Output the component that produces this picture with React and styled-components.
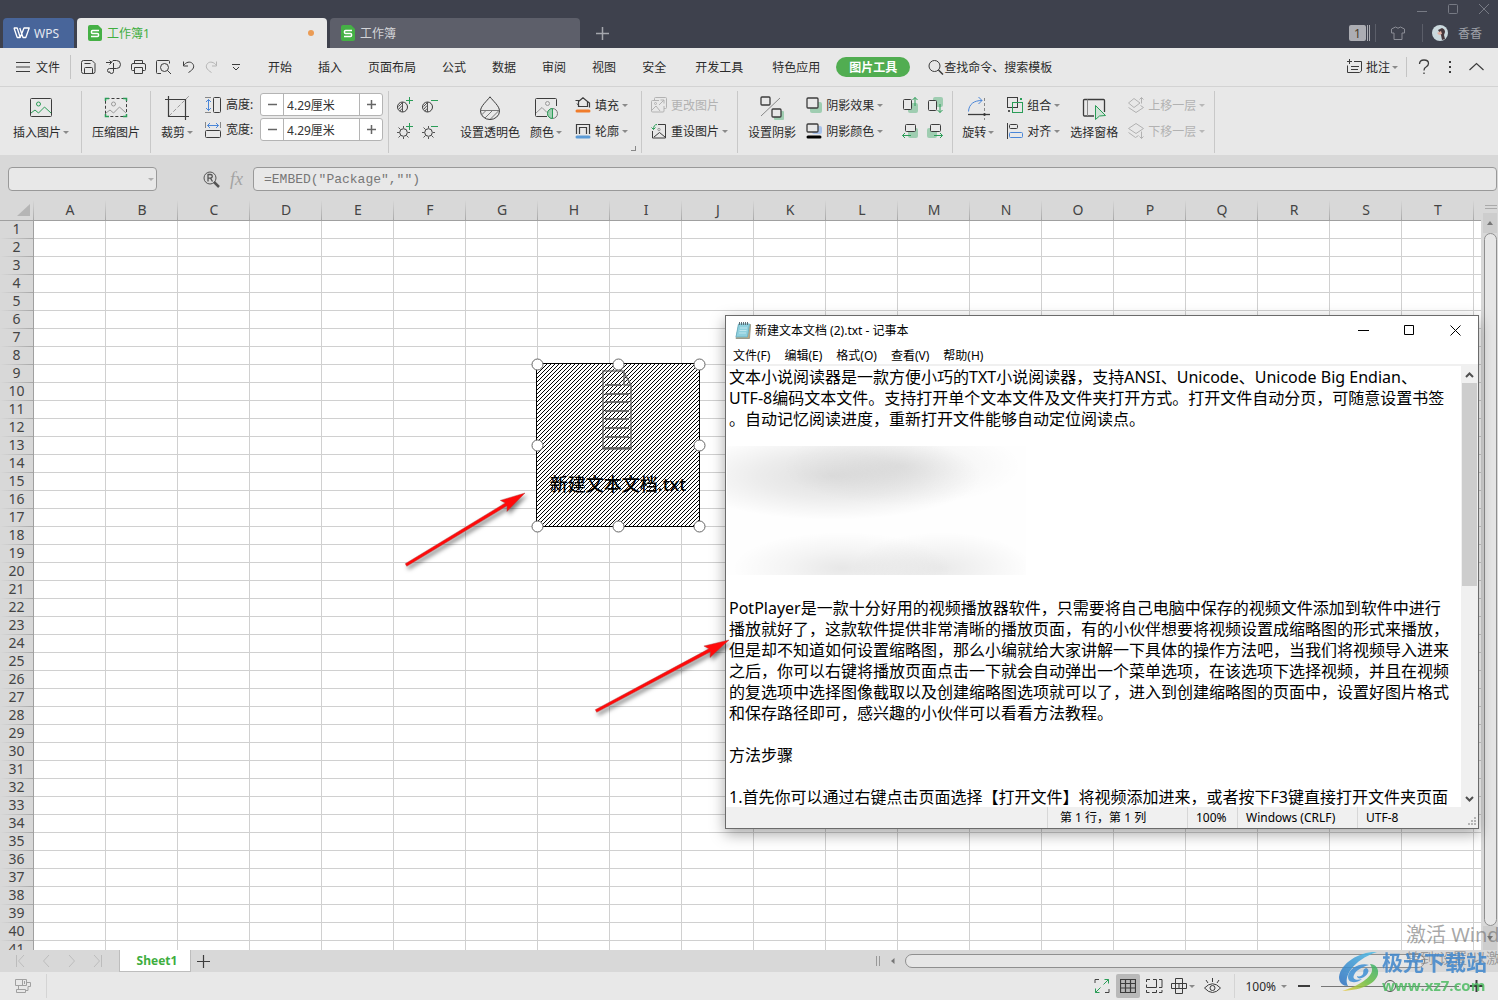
import React from 'react'
import styled, { createGlobalStyle } from 'styled-components'

const COLUMNS = 'ABCDEFGHIJKLMNOPQRST'.split('')
const ROWS = Array.from({ length: 41 }, (_, i) => i + 1)

const MENUS = ['开始', '插入', '页面布局', '公式', '数据', '审阅', '视图', '安全']

const NOTE_TEXT = [
  '文本小说阅读器是一款方便小巧的TXT小说阅读器，支持ANSI、Unicode、Unicode Big Endian、',
  'UTF-8编码文本文件。支持打开单个文本文件及文件夹打开方式。打开文件自动分页，可随意设置书签',
  '。自动记忆阅读进度，重新打开文件能够自动定位阅读点。',
  '', '', '', '', '', '', '', '',
  'PotPlayer是一款十分好用的视频播放器软件，只需要将自己电脑中保存的视频文件添加到软件中进行',
  '播放就好了，这款软件提供非常清晰的播放页面，有的小伙伴想要将视频设置成缩略图的形式来播放，',
  '但是却不知道如何设置缩略图，那么小编就给大家讲解一下具体的操作方法吧，当我们将视频导入进来',
  '之后，你可以右键将播放页面点击一下就会自动弹出一个菜单选项，在该选项下选择视频，并且在视频',
  '的复选项中选择图像截取以及创建缩略图选项就可以了，进入到创建缩略图的页面中，设置好图片格式',
  '和保存路径即可，感兴趣的小伙伴可以看看方法教程。',
  '',
  '方法步骤',
  '',
  '1.首先你可以通过右键点击页面选择【打开文件】将视频添加进来，或者按下F3键直接打开文件夹页面',
].join('\n')

/* ---------- icons ---------- */

const Svg = styled.svg`
  display: block;
  flex: none;
  fill: none;
  stroke: ${(p) => p.$color || '#3c3c3c'};
  stroke-width: 1;
`

function Icon({ w = 16, h = 16, color, children }) {
  return (
    <Svg width={w} height={h} viewBox={`0 0 ${w} ${h}`} $color={color} aria-hidden="true">
      {children}
    </Svg>
  )
}

const GREEN = '#2a9d57'
const BLUE = '#4a86d8'
const SHADE = '#9fcdb1'

const SheetLogo = () => (
  <Icon w={14} h={16} color="none">
    <path d="M2 0h8l4 4v10a2 2 0 0 1-2 2H2a2 2 0 0 1-2-2V2a2 2 0 0 1 2-2z" fill="#45b045" />
    <path d="M11 5.5H4.5q-1 0-1 1v1q0 1 1 1h5q1 0 1 1v1q0 1-1 1H3" stroke="#fff" strokeWidth="1.5" />
  </Icon>
)

const WpsLogo = () => (
  <Icon w={17} h={12} color="#fff">
    <path d="M.8 1h3.4l3 9.500L11 1h5.200l-3.400 9.500H10L6.800 1M4 10.500h3.200M4.200 10.500L1 1M10 10.500L8.600 6.500" strokeWidth="1.300" strokeLinejoin="round" />
  </Icon>
)

const SaveIcon = () => (
  <Icon w={15}>
    <path d="M.5 3.500a2 2 0 0 1 2-2h8.500l3 3v8a2 2 0 0 1-2 2H2.500a2 2 0 0 1-2-2zM3.500 14V9.500a1 1 0 0 1 1-1h6a1 1 0 0 1 1 1V14M3.500 4.500h6" />
  </Icon>
)

const ExportIcon = () => (
  <Icon w={15}>
    <path d="M0 3.500h5.500M3.500 1.500l2 2-2 2M5 3.500L7 1.500h3.500a4 4 0 0 1 0 8H3.500a2 2 0 1 0 0 4M7.500 4v8.500a2 2 0 0 1-4 0" />
  </Icon>
)

const PrintIcon = () => (
  <Icon w={15}>
    <path d="M3.500 4.500v-3h8v3M3.500 11.500h-2a1 1 0 0 1-1-1v-4.500a1.500 1.500 0 0 1 1.500-1.500h11a1.500 1.500 0 0 1 1.500 1.500v4.500a1 1 0 0 1-1 1h-2M3.500 8.500h8v6h-8z" />
  </Icon>
)

const PreviewIcon = () => (
  <Icon w={16}>
    <path d="M5 14.500H1.500a1 1 0 0 1-1-1v-11a1 1 0 0 1 1-1h11a1 1 0 0 1 1 1v2M11.500 11.500l3.500 3.500" />
    <circle cx="8.500" cy="8.500" r="4" />
  </Icon>
)

const UndoIcon = ({ flip }) => (
  <Icon w={13} color={flip ? '#b5b5b5' : undefined}>
    <path
      transform={flip ? 'translate(13 0) scale(-1 1)' : undefined}
      d="M1.500 2.500v4.500h4.500M1.500 6.500C4 3 8 2 10.500 4.500c2.500 3 1 6-4 9"
    />
  </Icon>
)

const MoreIcon = () => (
  <Icon w={15}>
    <path d="M4 5.500h8M5 8l3 3 3-3" />
  </Icon>
)

const SearchIcon = () => (
  <Icon w={16}>
    <circle cx="6.500" cy="7" r="5.500" />
    <path d="M10.500 11l4.500 4.500" strokeWidth="1.500" />
  </Icon>
)

const CommentIcon = () => (
  <Icon w={16}>
    <path d="M2.500 0v5M0 2.500h5M7 2.500h7.500v9.500l-2 1.500h-12v-7M4 7.500h8M4 10.500h7" />
  </Icon>
)

const PictureIcon = ({ muted, children }) => (
  <Icon w={24} h={24}>
    <rect x="1.500" y="2.500" width="21" height="18" rx="1" strokeDasharray={muted ? '3 2' : undefined} />
    <circle cx="9.500" cy="8" r="2" stroke={muted ? '#999' : GREEN} />
    <path d="M2 17l4-3 3.500 3 6-6 6.500 6" stroke={muted ? '#999' : GREEN} />
    {children}
  </Icon>
)

const CropIcon = () => (
  <Icon w={24} h={24}>
    <path d="M3.500 0v20.500H24M0 3.500h20.500V24" strokeWidth="1.200" />
    <path d="M4 20L24 0" strokeDasharray="4 2" stroke="#999" />
  </Icon>
)

const HeightIcon = () => (
  <Icon>
    <rect x="8.500" y=".5" width="7" height="15" rx="1" />
    <path d="M0 .5h6M0 15.500h6" stroke="#888" />
    <path d="M3.500 2.500v11M1 5l2.500-2.500L6 5M1 11l2.500 2.500L6 11" stroke={BLUE} />
  </Icon>
)

const WidthIcon = () => (
  <Icon>
    <rect x=".5" y="8.500" width="15" height="7" rx="1" />
    <path d="M.5 0v6M15.500 0v6" stroke="#888" />
    <path d="M2.500 3.500h11M5 1L2.500 3.500 5 6M11 1l2.500 2.500L11 6" stroke={BLUE} />
  </Icon>
)

const ContrastIcon = ({ minus }) => (
  <Icon>
    <circle cx="5.500" cy="10" r="5" />
    <path d="M5.500 5v10M5 6L1.500 9.500M5 8.500L2 12M5 11.500L3 14" stroke="#555" />
    <path d={minus ? 'M9 3.500h7' : 'M9 3.500h7M12.500 0v7'} stroke={GREEN} />
  </Icon>
)

const BrightIcon = ({ minus }) => (
  <Icon>
    <circle cx="6.500" cy="9.500" r="3.800" />
    <path d="M6.500 5V3M6.500 16v-2M2.500 9.500H0M13 9.500h-2M3.500 6.500L1.500 4.500M3.500 12.500l-2 2M9.500 12.500l2 2" stroke="#555" />
    <path d={minus ? 'M9 3.500h7' : 'M9 3.500h7M12.500 0v7'} stroke={GREEN} />
  </Icon>
)

const DropIcon = () => (
  <Icon w={24} h={24}>
    <path d="M12 .8C9 5 2.500 10 2.500 15a9.500 8.500 0 0 0 19 0C21.500 10 15 5 12 .8z" />
    <path d="M2.500 14.500h19M3.500 19l4.500-4.500M7 22l7-7M12.500 23l8-8" stroke="#777" />
  </Icon>
)

const ColorIcon = () => (
  <Icon w={24} h={24}>
    <path d="M13 20.500H2.500a1 1 0 0 1-1-1v-16a1 1 0 0 1 1-1h19a1 1 0 0 1 1 1V10" />
    <circle cx="13.500" cy="7.500" r="2" stroke="#999" />
    <path d="M2 17l6-5.500 5 5" stroke="#999" />
    <circle cx="18.500" cy="17.500" r="5" stroke="#777" />
    <path d="M18.500 12.500v10a5 5 0 0 1 0-10z" fill={SHADE} stroke={GREEN} />
  </Icon>
)

const FillIcon = () => (
  <Icon>
    <path d="M.5 3.500h4M8 .8L3.500 4.500v5h9v-5zM12.500 4.500l2 1.500v4.500" strokeWidth="1.200" />
    <path d="M4 9l-2-2.500" />
    <path d="M2 14h12" stroke="#f07c2b" strokeWidth="3" strokeLinecap="round" />
  </Icon>
)

const OutlineIcon = () => (
  <Icon>
    <path d="M1.500 11V1.500h13V11M4.500 11V4.500h7V11" strokeWidth="1.200" />
    <path d="M2 14h12" stroke="#5a9ad6" strokeWidth="3" strokeLinecap="round" />
  </Icon>
)

const ChangePicIcon = () => (
  <Icon color="#b2b2b2">
    <path d="M3.500 3V1.500a1 1 0 0 1 1-1h10a1 1 0 0 1 1 1v9a1 1 0 0 1-1 1H13M8 3.500H1.500a1 1 0 0 0-1 1v9.500a1 1 0 0 0 1 1H12a1 1 0 0 0 1-1V9M1 13l4-4 4 5M8 8l5-5M9.500 3H13v3.500" />
    <circle cx="4.500" cy="6.500" r="1" />
  </Icon>
)

const ResetPicIcon = () => (
  <Icon>
    <path d="M7 1.500h7.500v13.500h-13V8M3 14l5.500-4.500L14 14" />
    <circle cx="8" cy="6.500" r="1.200" stroke="#999" />
    <path d="M6 1.500q-3.500 0-3.500 5M.5 4.500l2 2 2-2" stroke={GREEN} />
  </Icon>
)

const SetShadowIcon = () => (
  <Icon w={24} h={24}>
    <rect x="14" y="15" width="10" height="9" rx="1" fill={SHADE} stroke="none" />
    <path d="M1 20L20 2" stroke="#888" />
    <rect x="1" y="1" width="9" height="8" rx="1" strokeWidth="1.300" />
    <rect x="12" y="13" width="9" height="8" rx="1" fill="#e8e8e8" strokeWidth="1.300" />
  </Icon>
)

const ShadowFxIcon = () => (
  <Icon>
    <rect x="4" y="5" width="12" height="11" rx="2" fill={SHADE} stroke="none" />
    <rect x="1" y="1" width="11" height="10" rx="1" fill="#e8e8e8" strokeWidth="1.300" />
  </Icon>
)

const ShadowColorIcon = () => (
  <Icon>
    <rect x="6" y="3" width="10" height="8" rx="2" fill="#a9c2ea" stroke="none" />
    <rect x="1" y="1" width="11" height="8" rx="1" fill="#e8e8e8" strokeWidth="1.300" />
    <path d="M2 14h12" stroke="#000" strokeWidth="3" strokeLinecap="round" />
  </Icon>
)

const NUDGES = {
  up: { shade: [6, 6], box: [1, 2], arrow: 'M13 9V.5M10.500 3L13 .5 15.500 3' },
  down: { shade: [6, 0], box: [1, 3], arrow: 'M13 7v8.500M10.500 13l2.500 2.500 2.500-2.500' },
  left: { shade: [6, 5], box: [3, 1], arrow: 'M9 12.500H.5M3 10L.5 12.500 3 15' },
  right: { shade: [0, 5], box: [3, 1], arrow: 'M7 12.500h8.500M13 10l2.500 2.500L13 15' },
}

const NudgeIcon = ({ dir }) => {
  const n = NUDGES[dir]
  const flat = dir === 'left' || dir === 'right'
  return (
    <Icon>
      <rect x={n.shade[0]} y={n.shade[1]} width="10" height="10" rx="2" fill={SHADE} stroke="none" />
      <rect x={n.box[0] + 0.5} y={n.box[1] + 0.5} width={flat ? 10 : 8} height={flat ? 7 : 10} rx="1" fill="#e8e8e8" />
      <path d={n.arrow} stroke={GREEN} />
    </Icon>
  )
}

const RotateIcon = () => (
  <Icon w={24} h={24}>
    <path d="M2.500 15.500C3 8 8 4.500 16 4.500M12.500 1l3.500 3.500L12.500 8" stroke={BLUE} />
    <path d="M18.500 2v22" stroke="#888" strokeDasharray="3 2" />
    <path d="M2 18.500h22" strokeWidth="1.300" />
    <circle cx="18.500" cy="18.500" r="1" fill="#333" />
  </Icon>
)

const GroupIcon = () => (
  <Icon>
    <rect x=".5" y=".5" width="10" height="10" />
    <rect x="5.500" y="5.500" width="10" height="10" stroke={GREEN} />
    <path d="M1 14h2" strokeWidth="2" stroke="#555" />
    <rect x="13" y="1" width="2" height="2" fill={GREEN} stroke="none" />
  </Icon>
)

const AlignIcon = () => (
  <Icon>
    <path d="M.5 0v16" />
    <rect x="2.500" y="1.500" width="8" height="4" rx="1" />
    <rect x="2.500" y="9.500" width="13" height="5" rx="1" stroke={BLUE} />
  </Icon>
)

const PaneIcon = () => (
  <Icon w={24} h={24}>
    <path d="M12 20H2.500a1 1 0 0 1-1-1V4.500a1 1 0 0 1 1-1h19a1 1 0 0 1 1 1V16" strokeWidth="1.300" />
    <path d="M5.500 3.500V20" stroke="#888" />
    <path d="M13.500 9.500v14l4-3.500 6-.5z" fill="#cfe3d7" stroke={GREEN} />
  </Icon>
)

const LayerIcon = ({ down }) => (
  <Icon color="#b2b2b2">
    {down ? (
      <path d="M.5 5.500l7.500-5 7.500 5-7.500 5zM.5 9.500l7 5 3-2M13.500 8.500v7M11.500 13.500l2 2 2-2" />
    ) : (
      <path d="M.5 6l5.500-4.500L12 6l-6 4.500zM.5 10.500l7.500 5 7.500-5-3-2M13.500 6.500v-6M11.500 2.500l2-2 2 2" />
    )}
  </Icon>
)

const NotepadIcon = () => (
  <Icon w={16} h={17} color="#5d6d74">
    <path d="M4 2.500h11.500l-1 14H1z" fill="#c4a779" stroke="#9b9b8c" />
    <path d="M3.500 2h11L12.500 15H1z" fill="#8fd0de" stroke="#6fb3c4" />
    <path d="M5 6h7M4.500 8.500h7M4 11h7" stroke="#bfe6ee" />
    <path d="M4.500 0v3M6.500 0v3M8.500 0v3M10.500 0v3M12.500 0v3" />
  </Icon>
)

/* ---------- shared parts ---------- */

const GlobalStyle = createGlobalStyle`
  * { box-sizing: border-box; }
  body {
    margin: 0;
    overflow: hidden;
  }
  body, button, input, textarea {
    font-family: "Noto Sans", "Noto Sans CJK SC", sans-serif;
    font-size: 12px;
  }
  button {
    border: none;
    background: none;
    padding: 0;
    color: inherit;
    white-space: nowrap;
  }
`

const Page = styled.div`
  position: relative;
  display: flex;
  flex-direction: column;
  height: 100vh;
  overflow: hidden;
  background: #d8d8d8;
  color: #2b2b2b;
  line-height: 16px;
`

const Caret = styled.span`
  flex: none;
  margin-left: -1px;
  border: solid transparent;
  border-width: 3px 3px 0;
  border-top-color: ${(p) => p.$color || '#8a8a8a'};
`

const Rule = styled.span`
  width: 1px;
  height: ${(p) => p.$h || 24}px;
  margin: ${(p) => p.$m || 0};
  background: ${(p) => p.$color || '#c4c4c4'};
`

/* ---------- title bar ---------- */

const TitleBar = styled.header`
  background: #3e414d;
`

const WindowButtons = styled.div`
  display: flex;
  justify-content: flex-end;
  align-items: center;
  gap: 21px;
  height: 18px;
  padding-right: 9px;

  button {
    display: flex;
  }
`

const Tabs = styled.div`
  display: flex;
  align-items: flex-end;
  gap: 3px;
  height: 30px;
  padding-left: 3px;
`

const WpsTab = styled.button`
  display: flex;
  align-items: center;
  gap: 4px;
  width: 71px;
  height: 30px;
  padding-left: 10px;
  border-radius: 4px 4px 0 0;
  background: #48659a;
  color: #e4e8f0;
`

const DocTab = styled.button`
  display: flex;
  align-items: center;
  gap: 5px;
  width: 250px;
  height: 30px;
  padding: 0 13px 0 11px;
  border-radius: 4px 4px 0 0;
  background: ${(p) => (p.$active ? '#e8e8e8' : '#5d5f6a')};
  color: ${(p) => (p.$active ? '#3fae3f' : '#d3d4d8')};
`

const Dot = styled.span`
  width: 6px;
  height: 6px;
  margin-left: auto;
  border-radius: 50%;
  background: #eb9c55;
`

const PlusTab = styled.button`
  display: flex;
  align-items: center;
  height: 30px;
  padding: 0 13px;
`

const UserArea = styled.div`
  display: flex;
  align-items: center;
  height: 30px;
  margin-left: auto;
  padding-right: 16px;
  color: #9fa1a9;
`

const TabCount = styled.button`
  display: flex;
  margin-right: 5px;

  span {
    width: 17px;
    height: 16px;
    border-radius: 2px;
    background: #acadb3;
    color: #4a3c28;
    text-align: center;
  }

  i {
    width: 1px;
    height: 16px;
    margin-left: 1px;
    background: #acadb3;
  }
`

const UserItem = styled.button`
  display: flex;
  align-items: center;
  gap: 10px;
  padding: ${(p) => p.$pad};
`

/* ---------- menu bar ---------- */

const MenuBar = styled.nav`
  display: flex;
  align-items: center;
  height: 39px;
  padding: 0 10px 0 15px;
  border-bottom: 1px solid #d3d3d3;
  background: #e8e8e8;
`

const FileButton = styled.button`
  display: flex;
  align-items: center;
  gap: 5px;
  margin-right: 10px;
`

const QuickBar = styled.div`
  display: flex;
  align-items: center;
  gap: 10px;
  margin: 0 12px 0 10px;
`

const MenuButton = styled.button`
  height: 20px;
  padding: 0 13px;
  border-radius: 10px;
  background: ${(p) => (p.$active ? '#51ad51' : 'none')};
  color: ${(p) => (p.$active ? '#fff' : 'inherit')};
  font-weight: ${(p) => (p.$active ? 600 : 400)};
`

const ToolMenus = styled.div`
  display: flex;
  gap: 3px;
  margin-left: 3px;
`

const SearchButton = styled.button`
  display: flex;
  align-items: center;
  margin-left: 18px;
`

const MenuRight = styled.div`
  display: flex;
  align-items: center;
  margin-left: auto;
`

const RightButton = styled.button`
  display: flex;
  align-items: center;
  justify-content: center;
  gap: 3px;
  min-width: 24px;
  margin-right: ${(p) => p.$gap || 0}px;
`

/* ---------- ribbon ---------- */

const Ribbon = styled.section`
  display: flex;
  height: 68px;
  background: #e8e8e8;
`

const Group = styled.div`
  display: flex;
  height: 62px;
  margin-top: 4px;
  padding: ${(p) => p.$pad};
  border-right: 1px solid #c8c8c8;
`

const BigTool = styled.button`
  display: flex;
  flex-direction: column;
  align-items: center;
  gap: 3px;
  height: 50px;
  padding-top: 5px;
  margin-left: ${(p) => p.$ml || 0}px;

  > span {
    display: flex;
    align-items: center;
    gap: 3px;
  }
`

const Stack = styled.div`
  display: flex;
  flex-direction: column;
  padding-top: 1px;
  margin-left: ${(p) => p.$ml || 0}px;
`

const SmallTool = styled.button`
  display: flex;
  align-items: center;
  gap: 4px;
  height: 26px;
  color: ${(p) => (p.$disabled ? '#b2b2b2' : 'inherit')};
`

const SizeRow = styled.div`
  display: flex;
  align-items: center;
  gap: 5px;
  height: 25px;

  label {
    width: 29px;
    white-space: nowrap;
  }
`

const Spinner = styled.div`
  display: flex;
  width: 123px;
  height: 23px;
  border: 1px solid #b4b4b4;
  border-radius: 3px;
  background: #fff;

  button {
    width: 22px;
    color: #666;
    display: flex;
    align-items: center;
    justify-content: center;
  }

  input {
    flex: 1;
    min-width: 0;
    border: solid #b4b4b4;
    border-width: 0 1px;
    padding: 0 3px;
    color: #333;
    background: #fff;
  }
`

const IconGrid = styled.div`
  display: grid;
  grid-template-columns: 16px 16px;
  grid-auto-rows: 26px;
  column-gap: ${(p) => p.$gap}px;
  padding-top: 1px;
  margin-left: ${(p) => p.$ml || 0}px;

  button {
    display: flex;
    align-items: center;
  }
`

const Launcher = styled.button`
  align-self: flex-end;
  width: 5px;
  height: 5px;
  margin: 0 0 2px 3px;
  border: solid #888;
  border-width: 0 1px 1px 0;
`

function Big({ icon, label, caret, ml }) {
  return (
    <BigTool $ml={ml}>
      {icon}
      <span>
        {label}
        {caret && <Caret />}
      </span>
    </BigTool>
  )
}

function Small({ icon, label, caret, disabled }) {
  return (
    <SmallTool $disabled={disabled}>
      {icon}
      {label}
      {caret && <Caret $color={disabled ? '#b8b8b8' : undefined} />}
    </SmallTool>
  )
}

function SizeField({ id, icon, label }) {
  return (
    <SizeRow>
      {icon}
      <label htmlFor={id}>{label}</label>
      <Spinner>
        <button aria-label={`减小${label}`}>
          <Icon w={9} h={9} color="#666"><path d="M0 4.500h9" strokeWidth="1.500" /></Icon>
        </button>
        <input id={id} defaultValue="4.29厘米" />
        <button aria-label={`增大${label}`}>
          <Icon w={9} h={9} color="#666"><path d="M0 4.500h9M4.500 0v9" strokeWidth="1.500" /></Icon>
        </button>
      </Spinner>
    </SizeRow>
  )
}

/* ---------- formula bar ---------- */

const FormulaBar = styled.div`
  display: flex;
  align-items: center;
  height: 45px;
  padding: 3px 1px 0 8px;
`

const NameBox = styled.div`
  display: flex;
  align-items: center;
  width: 149px;
  height: 24px;
  margin-right: 46px;
  padding-right: 2px;
  border: 1px solid #999;
  border-radius: 4px;
  background: #e8e8e8;

  input {
    flex: 1;
    min-width: 0;
    border: none;
    background: none;
  }
`

const Fx = styled.span`
  width: 17px;
  margin: 0 6px 0 10px;
  color: #a3a3a3;
  font: italic 18px/20px "Liberation Serif", serif;
`

const FormulaInput = styled.input`
  flex: 1;
  min-width: 0;
  height: 24px;
  padding: 0 10px;
  border: 1px solid #999;
  border-radius: 4px;
  background: #e8e8e8;
  color: #777;
  font: 13px "Liberation Mono", monospace;
`

/* ---------- sheet ---------- */

const Sheet = styled.main`
  display: flex;
  flex: 1;
  min-height: 0;
`

const GridView = styled.div`
  position: relative;
  flex: 1;
  min-width: 0;
  overflow: hidden;
  background: #fff;
`

const Grid = styled.table`
  table-layout: fixed;
  width: 1546px;
  border-spacing: 0;
  color: #444;

  th {
    height: 18px;
    padding: 0;
    background: #d8d8d8;
    font-size: 14px;
    font-weight: 400;
    line-height: 16px;
    vertical-align: top;
  }

  thead th {
    height: 21px;
    border-bottom: 1px solid #a0a0a0;
    background: linear-gradient(#d8d8d8, #a8a8a8) right / 1px 100% no-repeat #d8d8d8;
    line-height: 20px;
  }

  tbody th {
    border-right: 1px solid #a0a0a0;
    background: linear-gradient(90deg, #d8d8d8, #a8a8a8) bottom / 100% 1px no-repeat #d8d8d8;
  }

  td {
    padding: 0;
    border: solid #d0d0d0;
    border-width: 0 1px 1px 0;
  }
`

const Corner = styled.th`
  svg {
    margin: 4px 0 0 17px;
  }
`

/* the embedded object floats over the cells */
const EmbeddedObject = styled.div`
  position: absolute;
  left: 536px;
  top: 163px;
  width: 164px;
  height: 164px;

  > svg {
    position: absolute;
    left: -6px;
    top: -6px;
  }

  span {
    position: absolute;
    left: 0;
    right: 0;
    top: 105px;
    color: #000;
    font-size: 18px;
    font-weight: 500;
    line-height: 32px;
    text-align: center;
  }
`

const VScroll = styled.div`
  display: flex;
  flex-direction: column;
  align-items: flex-end;
  width: 17px;
  padding: 5px 1px 0 0;
  background: #d8d8d8;

  button {
    display: flex;
    align-items: center;
    justify-content: center;
    width: 14px;
    height: 20px;
    background: #cdcdcd;
  }

  button:last-child {
    height: 24px;
  }
`

const VThumb = styled.div`
  flex: 1;
  width: 13px;
  border: 1px solid #8f8f8f;
  border-radius: 7px;
  background: #e6e6e6;
`

const SplitHandle = styled.div`
  width: 12px;
  height: 4px;
  margin-bottom: 4px;
  border: solid #aaa;
  border-width: 1px 0;
`

/* ---------- bottom bars ---------- */

const SheetBar = styled.div`
  display: flex;
  height: 22px;
`

const SheetNav = styled.div`
  display: flex;
  align-items: center;
  gap: 16px;
  width: 119px;
  padding-left: 15px;
`

const SheetTab = styled.button`
  width: 72px;
  padding-left: 4px;
  border: solid #bdbdbd;
  border-width: 0 1px 1px;
  background: #fff;
  color: #3fae3f;
  font-weight: 700;
`

const AddSheet = styled.button`
  padding: 0 6px;
`

const HScroll = styled.div`
  display: flex;
  align-items: center;
  width: 616px;
  margin-left: auto;
  margin-right: 6px;
  gap: 10px;
`

const HThumb = styled.div`
  width: 520px;
  height: 14px;
  border: 1px solid #8f8f8f;
  border-radius: 7px;
  background: #e6e6e6;
`

const StatusBar = styled.footer`
  display: flex;
  align-items: center;
  height: 28px;
  padding: 0 15px;
  background: #e8e8e8;
`

const ViewButtons = styled.div`
  display: flex;
  align-items: center;
  margin-left: auto;
`

const ViewButton = styled.button`
  display: flex;
  align-items: center;
  justify-content: center;
  gap: 3px;
  min-width: 24px;
  height: 24px;
  margin-right: 2px;
  padding: 0 ${(p) => p.$px || 0}px;
  border-radius: 2px;
  background: ${(p) => (p.$active ? '#b9b9b9' : 'none')};
`

const Zoom = styled.div`
  display: flex;
  align-items: center;
  margin-left: 10px;
  gap: 11px;

  button {
    display: flex;
    align-items: center;
    gap: 6px;
  }

  input {
    width: 138px;
    height: 14px;
    margin: 0;
    appearance: none;
    background: linear-gradient(#777, #777) center / 100% 1px no-repeat;
  }

  input::-webkit-slider-thumb {
    appearance: none;
    width: 12px;
    height: 12px;
    border: 1px solid #555;
    border-radius: 50%;
    background: #e8e8e8;
  }
`

/* ---------- notepad window ---------- */

const Notepad = styled.section`
  position: absolute;
  left: 725px;
  top: 315px;
  display: flex;
  flex-direction: column;
  width: 754px;
  height: 514px;
  border: 1px solid #6b6b6b;
  background: #fff;
  box-shadow: 0 5px 14px rgba(0, 0, 0, 0.35);
  color: #000;
`

const NoteTitle = styled.div`
  display: flex;
  align-items: center;
  height: 29px;
  padding-left: 9px;

  h1 {
    flex: 1;
    margin: 0 0 0 4px;
    font-size: 12px;
    font-weight: 400;
  }

  button {
    display: flex;
    justify-content: center;
    width: 46px;
  }
`

const NoteMenu = styled.div`
  display: flex;
  gap: 14px;
  height: 21px;
  padding: 0 7px;
  border-bottom: 2px solid #f0f0f0;
`

const NoteBody = styled.div`
  position: relative;
  display: flex;
  flex: 1;
  min-height: 0;

  textarea {
    flex: 1;
    min-width: 0;
    padding: 1px 0 0 3px;
    border: none;
    outline: none;
    resize: none;
    overflow: hidden;
    white-space: pre;
    background: #fff;
    color: #000;
    font-size: 16px;
    line-height: 21px;
  }
`

const Smudge = styled.div`
  position: absolute;
  left: 1px;
  top: 80px;
  width: 299px;
  height: 129px;
  background:
    radial-gradient(ellipse 150px 44px at 105px 30px, rgba(0, 0, 0, 0.12), rgba(0, 0, 0, 0.07) 50%, transparent),
    radial-gradient(ellipse 120px 40px at 175px 20px, rgba(0, 0, 0, 0.07), rgba(0, 0, 0, 0.03) 50%, transparent),
    radial-gradient(ellipse 110px 36px at 115px 122px, rgba(0, 0, 0, 0.09), rgba(0, 0, 0, 0.04) 50%, transparent),
    radial-gradient(ellipse 90px 36px at 215px 122px, rgba(0, 0, 0, 0.08), rgba(0, 0, 0, 0.04) 50%, transparent),
    #fefefe;
`

const NoteScroll = styled.div`
  display: flex;
  flex-direction: column;
  width: 17px;
  background: #f0f0f0;

  button {
    display: flex;
    align-items: center;
    justify-content: center;
    height: 17px;
  }

  div {
    height: 203px;
    margin: 0 1px;
    background: #cdcdcd;
  }

  button:last-child {
    margin-top: auto;
  }
`

const NoteStatus = styled.div`
  display: flex;
  justify-content: flex-end;
  height: 21px;
  background: #f0f0f0;
  line-height: 22px;
`

const NoteCell = styled.span`
  width: ${(p) => p.$w}px;
  padding-left: ${(p) => p.$pad || 8}px;
  border-left: 1px solid #d7d7d7;
  white-space: nowrap;
`

/* ---------- overlays ---------- */

const Arrows = styled.svg`
  position: absolute;
  left: 400px;
  top: 480px;
  pointer-events: none;
  filter: drop-shadow(2px 3px 2px rgba(0, 0, 0, 0.5));
`

const Activation = styled.div`
  position: absolute;
  left: 1406px;
  bottom: 33px;
  color: rgba(110, 110, 110, 0.6);
  font-size: 14px;
  line-height: 18px;
  white-space: nowrap;
  pointer-events: none;

  strong {
    display: block;
    font-size: 20px;
    font-weight: 400;
    line-height: 28px;
  }
`

const SiteMark = styled.div`
  position: absolute;
  right: 11px;
  bottom: 6px;
  display: flex;
  align-items: center;
  gap: 1px;
  opacity: 0.85;
  pointer-events: none;

  p {
    margin: 0;
    color: #3f86cc;
    font-size: 21px;
    font-weight: 700;
    line-height: 28px;
  }

  p + p {
    color: #4dbb62;
    font-family: "Open Sans", sans-serif;
    font-size: 15px;
    line-height: 18px;
  }
`

function Arrow({ x1, y1, x2, y2 }) {
  const angle = (Math.atan2(y2 - y1, x2 - x1) * 180) / Math.PI
  const len = Math.hypot(x2 - x1, y2 - y1)
  return (
    <g transform={`translate(${x1} ${y1}) rotate(${angle})`} fill="#ff0a0a" stroke="#b04040" strokeWidth=".4">
      <path d={`M0 -1.500L${len - 22} -1.700L${len - 25} -6.500L${len} 0L${len - 25} 6.500L${len - 22} 1.700L0 1.500z`} />
    </g>
  )
}

function HatchedFrame() {
  const spots = [[7, 7], [88, 7], [169, 7], [7, 88], [169, 88], [7, 169], [88, 169], [169, 169]]
  return (
    <svg width="176" height="176" aria-hidden="true">
      <defs>
        <pattern id="hatch" width="4" height="4" patternUnits="userSpaceOnUse" shapeRendering="crispEdges">
          <rect width="4" height="4" fill="#fff" />
          <path d="M3 0h1v1h-1zM2 1h1v1h-1zM1 2h1v1h-1zM0 3h1v1h-1z" fill="#000" />
        </pattern>
      </defs>
      <rect x="6.500" y="6.500" width="163" height="163" fill="url(#hatch)" stroke="#000" />
      <g fill="none" stroke="#555" strokeOpacity=".8">
        <path d="M73 14h20l8 14v64H73zM94 14v14h7" strokeWidth="1.500" />
        <path d="M75 28h16M75 37h24M75 45h24M75 54h24M75 62h24M75 71h24M75 80h24M73 91h28" strokeWidth="2" />
      </g>
      {spots.map(([x, y]) => (
        <circle key={`${x}-${y}`} cx={x + 0.5} cy={y + 0.5} r="5.500" fill="#fff" stroke="#666" />
      ))}
    </svg>
  )
}

/* ---------- sections ---------- */

function TopTabs() {
  return (
    <TitleBar>
      <WindowButtons>
        <button aria-label="最小化"><Icon w={10} h={10} color="#777a84"><path d="M0 7.500h10" /></Icon></button>
        <button aria-label="最大化"><Icon w={10} h={10} color="#777a84"><rect x=".5" y=".5" width="9" height="9" rx="1" /></Icon></button>
        <button aria-label="关闭"><Icon w={10} h={10} color="#777a84"><path d="M0 0l10 10M10 0L0 10" /></Icon></button>
      </WindowButtons>
      <Tabs>
        <WpsTab><WpsLogo />WPS</WpsTab>
        <DocTab $active><SheetLogo />工作簿1<Dot /></DocTab>
        <DocTab><SheetLogo />工作簿</DocTab>
        <PlusTab aria-label="新建标签">
          <Icon w={13} h={13} color="#a4a6ad"><path d="M0 6.500h13M6.500 0v13" strokeWidth="1.500" /></Icon>
        </PlusTab>
        <UserArea>
          <TabCount><span>1</span><i /><i /></TabCount>
          <Rule $h={18} $color="#5b5e69" />
          <UserItem $pad="0 17px 0 15px" aria-label="皮肤">
            <Icon w={14} h={14} color="#8b8d96">
              <path d="M4.500 1L.5 3v4h2.500v6.500h8V7h2.500V3l-4-2Q7 3.500 4.500 1z" />
            </Icon>
          </UserItem>
          <Rule $h={18} $color="#5b5e69" />
          <UserItem $pad="0 0 0 9px">
            <Icon w={16} h={16} color="none">
              <circle cx="8" cy="8" r="8" fill="#cbd9de" />
              <path d="M6 5l4-2q3 1 3 4l-1 3 1 4-3 1-1-5z" fill="#46383c" />
              <path d="M5 8l4-2 1 3-3 1z" fill="#e3b3a6" />
            </Icon>
            香香
          </UserItem>
        </UserArea>
      </Tabs>
    </TitleBar>
  )
}

function Menus() {
  return (
    <MenuBar>
      <FileButton>
        <Icon w={16}><path d="M1 3.500h14M1 8h14M1 12.500h14" /></Icon>
        文件
      </FileButton>
      <Rule />
      <QuickBar>
        <button aria-label="保存"><SaveIcon /></button>
        <button aria-label="输出为PDF"><ExportIcon /></button>
        <button aria-label="打印"><PrintIcon /></button>
        <button aria-label="打印预览"><PreviewIcon /></button>
        <button aria-label="撤销"><UndoIcon /></button>
        <button aria-label="恢复"><UndoIcon flip /></button>
        <button aria-label="更多"><MoreIcon /></button>
      </QuickBar>
      {MENUS.map((m) => <MenuButton key={m}>{m}</MenuButton>)}
      <ToolMenus>
        <MenuButton>开发工具</MenuButton>
        <MenuButton>特色应用</MenuButton>
        <MenuButton $active>图片工具</MenuButton>
      </ToolMenus>
      <SearchButton><SearchIcon />查找命令、搜索模板</SearchButton>
      <MenuRight>
        <RightButton $gap={8}><CommentIcon />批注<Caret /></RightButton>
        <Rule $h={20} $m="0 5px 0 0" />
        <RightButton aria-label="帮助" $gap={2}>
          <Icon w={12}><path d="M1.500 5q0-4 4.500-4t4.500 3.500q0 2-2.500 3.500-2 1-2 3.500M6 13.500v1.500" strokeWidth="1.300" /></Icon>
        </RightButton>
        <RightButton aria-label="选项" $gap={2}>
          <Icon w={4}><path d="M2 2v2M2 7v2M2 12v2" strokeWidth="2" /></Icon>
        </RightButton>
        <RightButton aria-label="收起功能区">
          <Icon w={15}><path d="M.5 11l7-6.500 7 6.500" strokeWidth="1.200" /></Icon>
        </RightButton>
      </MenuRight>
    </MenuBar>
  )
}

function PictureRibbon() {
  return (
    <Ribbon>
      <Group $pad="0 12px 0 13px">
        <Big icon={<PictureIcon />} label="插入图片" caret />
      </Group>
      <Group $pad="0 10px">
        <Big
          icon={(
            <PictureIcon muted>
              <path d="M1.500 5V2.500H5M19 2.500h3.500V5M1.500 18v2.500H5M19 20.500h3.500V18" stroke={GREEN} strokeWidth="1.500" />
            </PictureIcon>
          )}
          label="压缩图片"
        />
      </Group>
      <Group $pad="0 5px 0 10px">
        <Big icon={<CropIcon />} label="裁剪" caret />
        <Stack $ml={12}>
          <SizeField id="pic-height" icon={<HeightIcon />} label="高度:" />
          <SizeField id="pic-width" icon={<WidthIcon />} label="宽度:" />
        </Stack>
      </Group>
      <Group $pad="0 5px 0 8px">
        <IconGrid $gap={9}>
          <button aria-label="增加对比度"><ContrastIcon /></button>
          <button aria-label="降低对比度"><ContrastIcon minus /></button>
          <button aria-label="增加亮度"><BrightIcon /></button>
          <button aria-label="降低亮度"><BrightIcon minus /></button>
        </IconGrid>
        <Big ml={22} icon={<DropIcon />} label="设置透明色" />
        <Big ml={10} icon={<ColorIcon />} label="颜色" caret />
        <Stack $ml={13}>
          <Small icon={<FillIcon />} label="填充" caret />
          <Small icon={<OutlineIcon />} label="轮廓" caret />
        </Stack>
        <Launcher aria-label="图片设置" />
      </Group>
      <Group $pad="0 9px">
        <Stack>
          <Small icon={<ChangePicIcon />} label="更改图片" disabled />
          <Small icon={<ResetPicIcon />} label="重设图片" caret />
        </Stack>
      </Group>
      <Group $pad="0 9px 0 10px">
        <Big icon={<SetShadowIcon />} label="设置阴影" />
        <Stack $ml={10}>
          <Small icon={<ShadowFxIcon />} label="阴影效果" caret />
          <Small icon={<ShadowColorIcon />} label="阴影颜色" caret />
        </Stack>
        <IconGrid $gap={9} $ml={19}>
          <button aria-label="上移阴影"><NudgeIcon dir="up" /></button>
          <button aria-label="下移阴影"><NudgeIcon dir="down" /></button>
          <button aria-label="左移阴影"><NudgeIcon dir="left" /></button>
          <button aria-label="右移阴影"><NudgeIcon dir="right" /></button>
        </IconGrid>
      </Group>
      <Group $pad="0 9px">
        <Big icon={<RotateIcon />} label="旋转" caret />
        <Stack $ml={13}>
          <Small icon={<GroupIcon />} label="组合" caret />
          <Small icon={<AlignIcon />} label="对齐" caret />
        </Stack>
        <Big ml={10} icon={<PaneIcon />} label="选择窗格" />
        <Stack $ml={10}>
          <Small icon={<LayerIcon />} label="上移一层" caret disabled />
          <Small icon={<LayerIcon down />} label="下移一层" caret disabled />
        </Stack>
      </Group>
    </Ribbon>
  )
}

function Formula() {
  return (
    <FormulaBar>
      <NameBox>
        <input aria-label="名称框" />
        <Caret $color="#b0b0b0" />
      </NameBox>
      <button aria-label="浏览公式结果">
        <Icon w={17} h={17} color="#555">
          <circle cx="7" cy="7" r="6" />
          <path d="M11 11l5 5" strokeWidth="2.500" />
          <path d="M5 10.500v-7h2.500a1.800 1.800 0 0 1 0 3.600H5M7.500 7.200L9.500 10.500" strokeWidth="1.300" />
        </Icon>
      </button>
      <Fx>fx</Fx>
      <FormulaInput aria-label="编辑栏" defaultValue='=EMBED("Package","")' />
    </FormulaBar>
  )
}

function Cells() {
  return (
    <Grid>
      <colgroup>
        <col style={{ width: 34 }} />
        {COLUMNS.map((c) => <col key={c} />)}
        <col />
      </colgroup>
      <thead>
        <tr>
          <Corner>
            <Icon w={13} h={12} color="none"><path d="M13 0v12H0z" fill="#b5b5b5" /></Icon>
          </Corner>
          {COLUMNS.map((c) => <th key={c} scope="col">{c}</th>)}
          <th />
        </tr>
      </thead>
      <tbody>
        {ROWS.map((r) => (
          <tr key={r}>
            <th scope="row">{r}</th>
            {COLUMNS.map((c) => <td key={c} />)}
            <td />
          </tr>
        ))}
      </tbody>
    </Grid>
  )
}

function SheetTabs() {
  const arrows = ['M1.500 0v12M9 0L3.500 6 9 12', 'M8 0L2.500 6 8 12', 'M2 0l5.500 6L2 12', 'M8.500 0v12M1 0l5.500 6L1 12']
  return (
    <SheetBar>
      <SheetNav>
        {arrows.map((d, i) => (
          <button key={d} aria-label={`工作表导航${i + 1}`}>
            <Icon w={10} h={12} color="#bcbcbc"><path d={d} /></Icon>
          </button>
        ))}
      </SheetNav>
      <SheetTab>Sheet1</SheetTab>
      <AddSheet aria-label="新建工作表">
        <Icon w={13} h={13}><path d="M0 6.500h13M6.500 0v13" strokeWidth="1.200" /></Icon>
      </AddSheet>
      <HScroll>
        <Icon w={4} h={10} color="#999"><path d="M.5 0v10M3.500 0v10" /></Icon>
        <Icon w={5} h={6} color="none"><path d="M4.500 0v6L1 3z" fill="#777" /></Icon>
        <HThumb />
      </HScroll>
    </SheetBar>
  )
}

function Status() {
  return (
    <StatusBar>
      <Icon w={17} h={16} color="#a0a0a0">
        <path d="M.5 1.500h11v6H.5zM7.500 1.500v6M3.500 7.500v4M1.500 11.500h9v3h-9zM12 4.500h3.500v4H13v4h-2M9.500 3v3" />
      </Icon>
      <Rule $m="0 0 0 14px" $color="#d4d4d4" />
      <ViewButtons>
        <ViewButton aria-label="全屏">
          <Icon w={16} color="#444">
            <path d="M1 5V1.500h4M15 11v3.500h-4" />
            <path d="M9.500 6.500l5-5M10.500 1.500h4v4M6.500 9.500l-5 5M1.500 10.500v4h4" stroke={GREEN} />
          </Icon>
        </ViewButton>
        <ViewButton aria-label="普通视图" $active>
          <Icon w={16}><path d="M.5 1.500h15v13H.5zM.5 5.500h15M.5 10h15M5.500 1.500v13M10.500 1.500v13" strokeWidth="1.200" /></Icon>
        </ViewButton>
        <ViewButton aria-label="分页预览">
          <Icon w={17}><path d="M4 1.500H.5V4M7 1.500h3.500v8H.5V6.500M.5 12v2.500h3M6 14.500h4.500V12M13 1.500h3v8h-3M13 14.500h3V12" /></Icon>
        </ViewButton>
        <ViewButton aria-label="页面布局" $px={3}>
          <Icon w={16}><path d="M4.500 .5h7v15h-7zM.5 5.500h15v5H.5zM8 5.500v5" /></Icon>
          <Caret />
        </ViewButton>
        <ViewButton aria-label="护眼模式">
          <Icon w={17}>
            <path d="M.5 10q8-8.500 16 0-8 9-16 0zM8.500 0v4M2 2l2 3M15 2l-2 3" />
            <circle cx="8.500" cy="10" r="2.500" />
          </Icon>
        </ViewButton>
      </ViewButtons>
      <Rule $m="0 0 0 8px" $color="#d4d4d4" />
      <Zoom>
        <button>100%<Caret /></button>
        <button aria-label="缩小"><Icon w={12} h={12}><path d="M0 6h12" strokeWidth="2" /></Icon></button>
        <input type="range" aria-label="缩放" defaultValue="50" />
        <button aria-label="放大"><Icon w={13} h={12}><path d="M0 6h13M6.500 0v12" strokeWidth="2" /></Icon></button>
      </Zoom>
    </StatusBar>
  )
}

function NotepadWindow() {
  return (
    <Notepad>
      <NoteTitle>
        <NotepadIcon />
        <h1>新建文本文档 (2).txt - 记事本</h1>
        <button aria-label="最小化"><Icon w={11} h={11} color="#000"><path d="M0 5.500h11" /></Icon></button>
        <button aria-label="最大化"><Icon w={11} h={11} color="#000"><path d="M.5 .5h9v9h-9z" /></Icon></button>
        <button aria-label="关闭"><Icon w={11} h={11} color="#000"><path d="M.5 .5l10 10M10.500 .5l-10 10" /></Icon></button>
      </NoteTitle>
      <NoteMenu>
        {['文件(F)', '编辑(E)', '格式(O)', '查看(V)', '帮助(H)'].map((m) => <button key={m}>{m}</button>)}
      </NoteMenu>
      <NoteBody>
        <textarea aria-label="文本内容" defaultValue={NOTE_TEXT} spellCheck="false" />
        <Smudge />
        <NoteScroll>
          <button aria-label="向上滚动"><Icon w={9} h={6} color="#505050"><path d="M1 5l3.500-3.500L8 5" strokeWidth="2" /></Icon></button>
          <div />
          <button aria-label="向下滚动"><Icon w={9} h={6} color="#505050"><path d="M1 1l3.500 3.500L8 1" strokeWidth="2" /></Icon></button>
        </NoteScroll>
      </NoteBody>
      <NoteStatus>
        <NoteCell $w={140} $pad={12}>第 1 行，第 1 列</NoteCell>
        <NoteCell $w={50}>100%</NoteCell>
        <NoteCell $w={120}>Windows (CRLF)</NoteCell>
        <NoteCell $w={110}>UTF-8</NoteCell>
        <Icon w={11} h={20} color="none">
          <path d="M7 10h2v2H7zM4 13h2v2H4zM7 13h2v2H7zM1 16h2v2H1zM4 16h2v2H4zM7 16h2v2H7z" fill="#b5b5b5" />
        </Icon>
      </NoteStatus>
    </Notepad>
  )
}

export default function App() {
  return (
    <>
      <GlobalStyle />
      <Page>
        <TopTabs />
        <Menus />
        <PictureRibbon />
        <Formula />
        <Sheet>
          <GridView>
            <Cells />
            <EmbeddedObject>
              <HatchedFrame />
              <span>新建文本文档.txt</span>
            </EmbeddedObject>
          </GridView>
          <VScroll>
            <SplitHandle />
            <button aria-label="向上"><Icon w={6} h={4} color="none"><path d="M3 0l3 4H0z" fill="#777" /></Icon></button>
            <VThumb />
            <button aria-label="向下"><Icon w={6} h={4} color="none"><path d="M0 0h6L3 4z" fill="#777" /></Icon></button>
          </VScroll>
        </Sheet>
        <SheetTabs />
        <Status />
        <NotepadWindow />
        <Arrows width="340" height="240" aria-hidden="true">
          <Arrow x1={6} y1={85} x2={125} y2={13} />
          <Arrow x1={196} y1={231} x2={329} y2={160} />
        </Arrows>
        <Activation>
          <strong>激活 Windows</strong>
          转到“设置”以激活 Windows。
        </Activation>
        <SiteMark>
          <Icon w={44} h={42} color="none">
            <defs>
              <linearGradient id="swirl-blue" x1="0" y1="1" x2="1" y2="0">
                <stop offset="0" stopColor="#2d6fc0" />
                <stop offset="1" stopColor="#4fc0e8" />
              </linearGradient>
              <linearGradient id="swirl-green" x1="0" y1="1" x2="1" y2="0">
                <stop offset="0" stopColor="#f0c93a" />
                <stop offset=".5" stopColor="#6fbf3f" />
                <stop offset="1" stopColor="#35b070" />
              </linearGradient>
            </defs>
            <path d="M40 2C24 1 4 12 2 27c0 6 4 9 9 9-5-9 5-26 29-34z" fill="url(#swirl-blue)" />
            <path d="M32 15c-9-3-21 4-21 12 0 6 8 7 14 2-6 2-10 0-8-4 2-5 8-8 15-10z" fill="#3d8fd4" />
            <path d="M33 14c5 0 9 4 8 10-2 9-14 16-36 17 14-4 28-12 30-20 .5-3-1-5-2-7z" fill="url(#swirl-green)" />
            <path d="M29 18c4 1 3 6-2 9-3 2-7 2-7-1 2 1 5 0 6-2 1-3-1-4 3-6z" fill="#3d8fd4" />
          </Icon>
          <div>
            <p>极光下载站</p>
            <p>www.xz7.com</p>
          </div>
        </SiteMark>
      </Page>
    </>
  )
}
